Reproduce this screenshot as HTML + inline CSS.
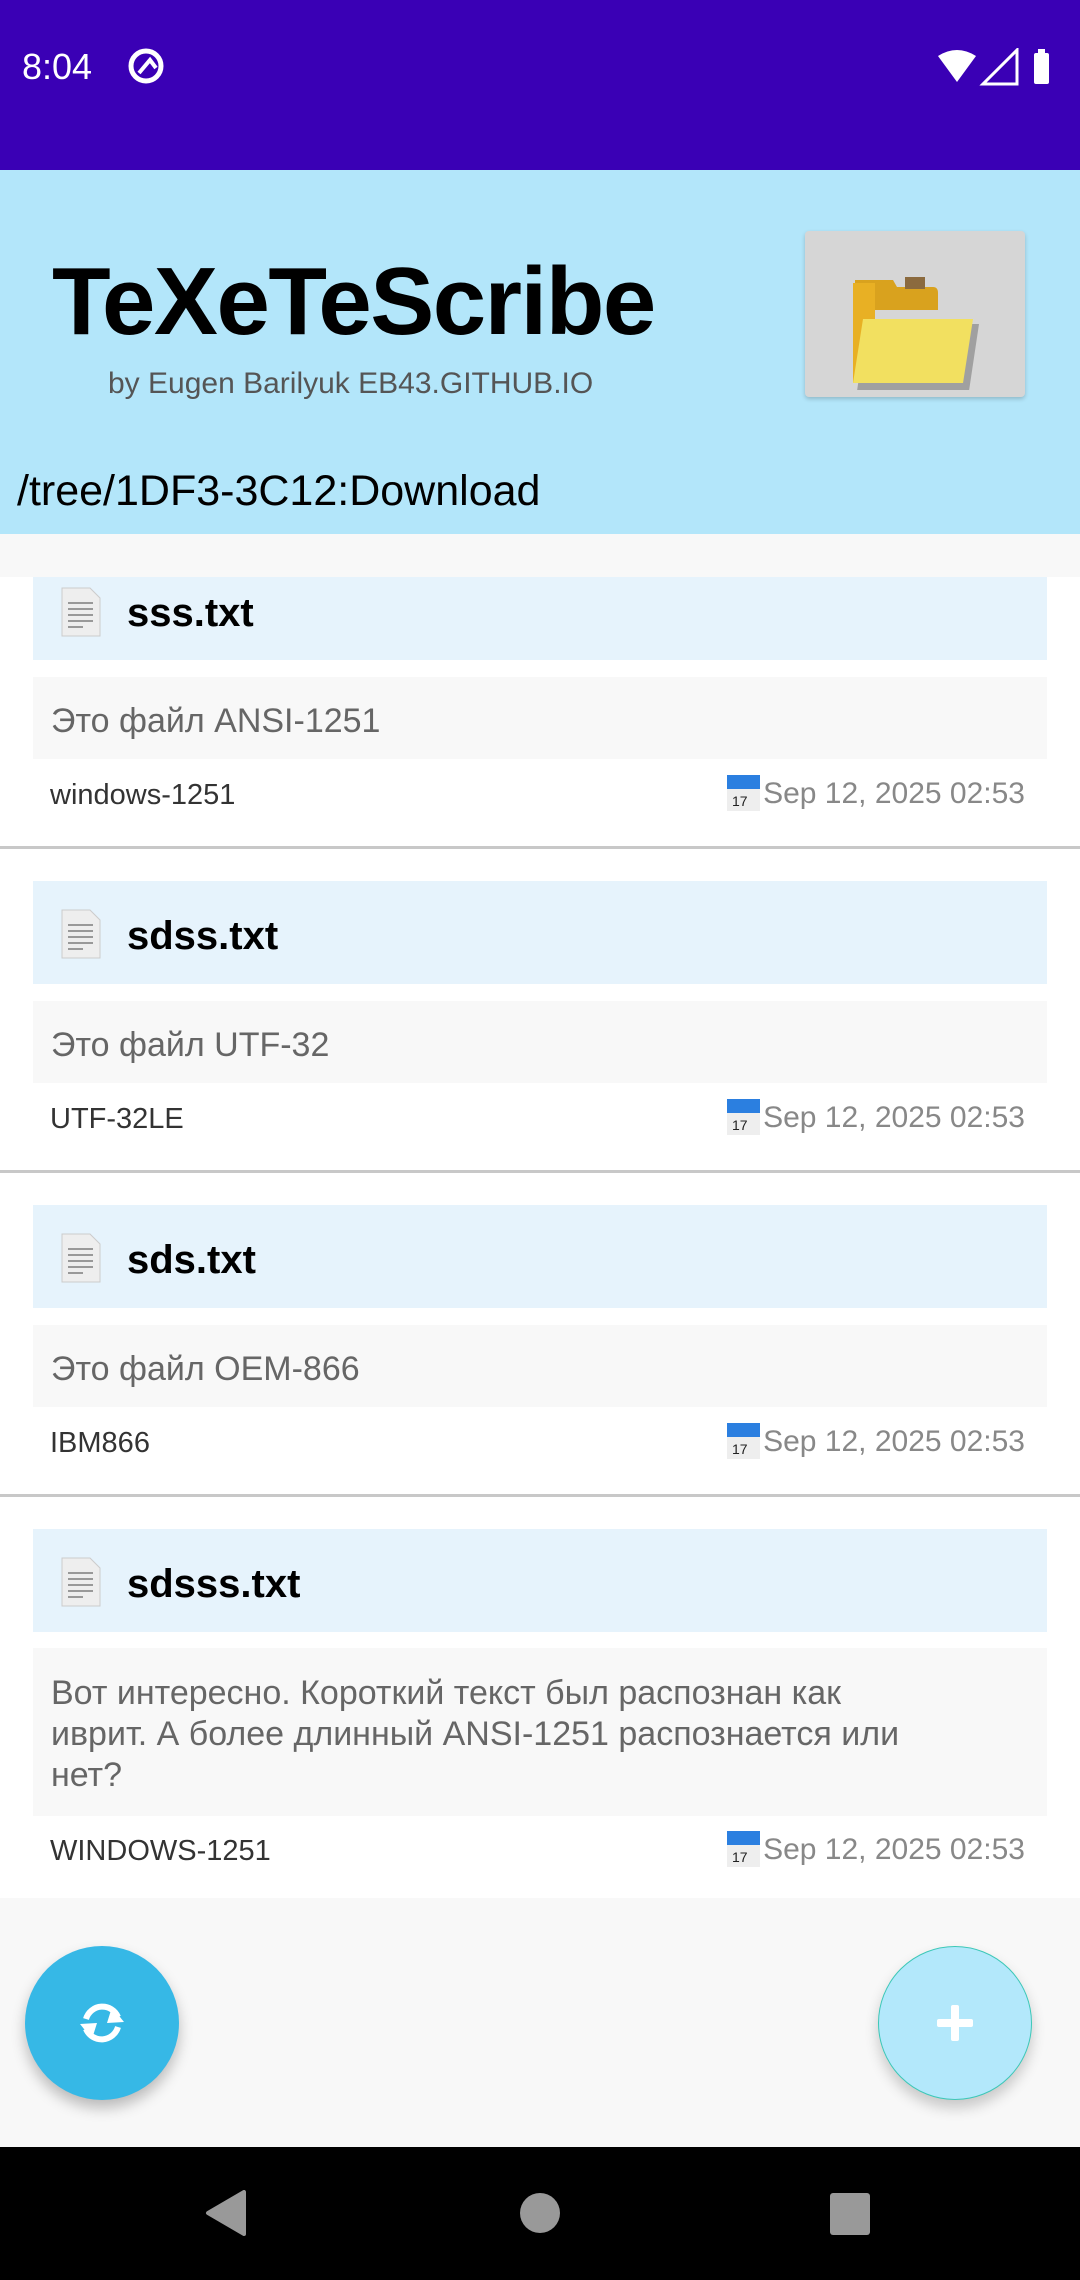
<!DOCTYPE html>
<html><head><meta charset="utf-8"><style>
*{margin:0;padding:0;box-sizing:border-box}
body{width:1080px;height:2280px;position:relative;overflow:hidden;background:#f8f8f8;font-family:"Liberation Sans","Noto Sans CJK SC",sans-serif}
.a{position:absolute}
.card{position:absolute;left:0;width:1080px;background:#fff;border-bottom:3px solid #c8c8c8}
.tb{position:absolute;left:33px;width:1014px;background:#e6f3fc}
.tt{position:absolute;left:94px;font-weight:bold;font-size:40px;color:#000;white-space:nowrap}
.cb{position:absolute;left:33px;width:1014px;background:#f8f8f8;color:#666;font-size:34px;padding-left:18px;line-height:41px}
.enc{position:absolute;left:50px;font-size:29px;color:#333;white-space:nowrap}
.dt{position:absolute;right:55px;font-size:30px;color:#888;white-space:nowrap}
.cal{position:absolute;width:33px;height:36px}
.doc{position:absolute;left:29px;width:40px;height:50px}
</style></head><body>
<div class="a" style="left:0;top:0;width:1080px;height:170px;background:#3a00b5"></div>
<div class="a" style="left:22px;top:46px;color:#fff;font-size:36px">8:04</div>
<svg class="a" style="left:126px;top:46px" width="40" height="40" viewBox="0 0 40 40"><circle cx="20" cy="20" r="15" fill="none" stroke="#fff" stroke-width="5"/><path d="M13 27 L24 14 L30 22" fill="none" stroke="#fff" stroke-width="4"/></svg>
<svg class="a" style="left:938px;top:48px" width="112" height="38" viewBox="0 0 112 38"><path d="M0 8 Q19 -4 38 8 L19 34 Z" fill="#fff"/><path d="M79 2 L79 36 L45 36 Z" fill="none" stroke="#fff" stroke-width="3"/><rect x="96" y="5" width="15" height="31" rx="2" fill="#fff"/><rect x="100" y="1" width="7" height="5" fill="#fff"/></svg>
<div class="a" style="left:0;top:170px;width:1080px;height:364px;background:#b3e6fa"></div>
<div class="a" style="left:52px;top:247px;font-size:96px;font-weight:bold;letter-spacing:-1.5px;color:#000;line-height:110px">TeXeTeScribe</div>
<div class="a" style="left:108px;top:367px;font-size:30px;color:#555">by Eugen Barilyuk EB43.GITHUB.IO</div>
<div class="a" style="left:805px;top:231px;width:220px;height:166px;background:#d6d6d6;border-radius:4px;box-shadow:0 2px 4px rgba(0,0,0,.2)"></div>
<svg class="a" style="left:845px;top:275px" width="140" height="115" viewBox="0 0 140 115"><path d="M10 5 H48 L52 12 H88 Q93 12 93 18 V35 H10 Z" fill="#d9a21e"/><rect x="60" y="2" width="20" height="12" fill="#8b6a3e"/><path d="M8 112 L18 45 H130 L120 112 Z" fill="#000" opacity=".25" transform="translate(4,4)"/><path d="M8 8 H30 V108 H8 Z" fill="#e8b024"/><path d="M8 108 L18 44 H128 L118 108 Z" fill="#f2e060"/></svg>
<div class="a" style="left:17px;top:467px;font-size:43px;color:#000">/tree/1DF3-3C12:Download</div>

<!-- card 1 -->
<div class="card" style="top:577px;height:272px">
<div class="tb" style="top:0;height:83px"></div>
<svg class="doc" style="left:61px;top:10px" viewBox="0 0 40 50"><path d="M1 1 H29 L39 11 V49 H1Z" fill="#eee" stroke="#ccc"/><path d="M7 16H32M7 22H32M7 28H32M7 34H32M7 40H22" stroke="#999" stroke-width="2"/></svg>
<div class="tt" style="left:127px;top:14px">sss.txt</div>
<div class="cb" style="top:100px;height:82px;line-height:88px">Это файл ANSI-1251</div>
<div class="enc" style="top:202px">windows-1251</div>
<svg class="cal" style="left:727px;top:198px" viewBox="0 0 33 36"><rect width="33" height="36" fill="#eee"/><rect width="33" height="14" fill="#2b7fe0"/><text x="5" y="31" font-size="14" fill="#222" font-family="Liberation Sans">17</text></svg>
<div class="dt" style="top:200px">Sep 12, 2025 02:53</div>
</div>

<!-- card 2 -->
<div class="card" style="top:849px;height:324px">
<div class="tb" style="top:32px;height:103px"></div>
<svg class="doc" style="left:61px;top:60px" viewBox="0 0 40 50"><path d="M1 1 H29 L39 11 V49 H1Z" fill="#eee" stroke="#ccc"/><path d="M7 16H32M7 22H32M7 28H32M7 34H32M7 40H22" stroke="#999" stroke-width="2"/></svg>
<div class="tt" style="left:127px;top:65px">sdss.txt</div>
<div class="cb" style="top:152px;height:82px;line-height:88px">Это файл UTF-32</div>
<div class="enc" style="top:254px">UTF-32LE</div>
<svg class="cal" style="left:727px;top:250px" viewBox="0 0 33 36"><rect width="33" height="36" fill="#eee"/><rect width="33" height="14" fill="#2b7fe0"/><text x="5" y="31" font-size="14" fill="#222" font-family="Liberation Sans">17</text></svg>
<div class="dt" style="top:252px">Sep 12, 2025 02:53</div>
</div>

<!-- card 3 -->
<div class="card" style="top:1173px;height:324px">
<div class="tb" style="top:32px;height:103px"></div>
<svg class="doc" style="left:61px;top:60px" viewBox="0 0 40 50"><path d="M1 1 H29 L39 11 V49 H1Z" fill="#eee" stroke="#ccc"/><path d="M7 16H32M7 22H32M7 28H32M7 34H32M7 40H22" stroke="#999" stroke-width="2"/></svg>
<div class="tt" style="left:127px;top:65px">sds.txt</div>
<div class="cb" style="top:152px;height:82px;line-height:88px">Это файл OEM-866</div>
<div class="enc" style="top:254px">IBM866</div>
<svg class="cal" style="left:727px;top:250px" viewBox="0 0 33 36"><rect width="33" height="36" fill="#eee"/><rect width="33" height="14" fill="#2b7fe0"/><text x="5" y="31" font-size="14" fill="#222" font-family="Liberation Sans">17</text></svg>
<div class="dt" style="top:252px">Sep 12, 2025 02:53</div>
</div>

<!-- card 4 -->
<div class="card" style="top:1497px;height:401px;border-bottom:none">
<div class="tb" style="top:32px;height:103px"></div>
<svg class="doc" style="left:61px;top:60px" viewBox="0 0 40 50"><path d="M1 1 H29 L39 11 V49 H1Z" fill="#eee" stroke="#ccc"/><path d="M7 16H32M7 22H32M7 28H32M7 34H32M7 40H22" stroke="#999" stroke-width="2"/></svg>
<div class="tt" style="left:127px;top:65px">sdsss.txt</div>
<div class="cb" style="top:151px;height:168px;padding-top:25px">Вот интересно. Короткий текст был распознан как<br>иврит. А более длинный ANSI-1251 распознается или<br>нет?</div>
<div class="enc" style="top:338px">WINDOWS-1251</div>
<svg class="cal" style="left:727px;top:334px" viewBox="0 0 33 36"><rect width="33" height="36" fill="#eee"/><rect width="33" height="14" fill="#2b7fe0"/><text x="5" y="31" font-size="14" fill="#222" font-family="Liberation Sans">17</text></svg>
<div class="dt" style="top:336px">Sep 12, 2025 02:53</div>
</div>

<div class="a" style="left:25px;top:1946px;width:154px;height:154px;border-radius:50%;background:#36b8e6;box-shadow:0 8px 14px rgba(0,0,0,.25)"></div>
<svg class="a" style="left:74px;top:1995px" width="56" height="56" viewBox="0 0 56 56"><path d="M44 22 A17 17 0 0 0 12 24" fill="none" stroke="#fff" stroke-width="6"/><path d="M38 12 L50 27 L33 28Z" fill="#fff"/><path d="M12 34 A17 17 0 0 0 44 32" fill="none" stroke="#fff" stroke-width="6"/><path d="M18 44 L6 29 L23 28Z" fill="#fff"/></svg>
<div class="a" style="left:878px;top:1946px;width:154px;height:154px;border-radius:50%;background:#b3e8fb;border:1.5px solid #3cc8b8;box-shadow:0 8px 14px rgba(0,0,0,.2)"></div>
<div class="a" style="left:937px;top:2019px;width:36px;height:8px;background:#fff;border-radius:2px"></div>
<div class="a" style="left:951px;top:2005px;width:8px;height:36px;background:#fff;border-radius:2px"></div>

<div class="a" style="left:0;top:2147px;width:1080px;height:133px;background:#000"></div>
<svg class="a" style="left:200px;top:2190px" width="50" height="46" viewBox="0 0 50 46"><path d="M44 2 L44 44 L8 23 Z" fill="#999" stroke="#999" stroke-width="4" stroke-linejoin="round"/></svg>
<div class="a" style="left:520px;top:2193px;width:40px;height:40px;border-radius:50%;background:#999"></div>
<div class="a" style="left:830px;top:2193px;width:40px;height:42px;border-radius:3px;background:#999"></div>
</body></html>
